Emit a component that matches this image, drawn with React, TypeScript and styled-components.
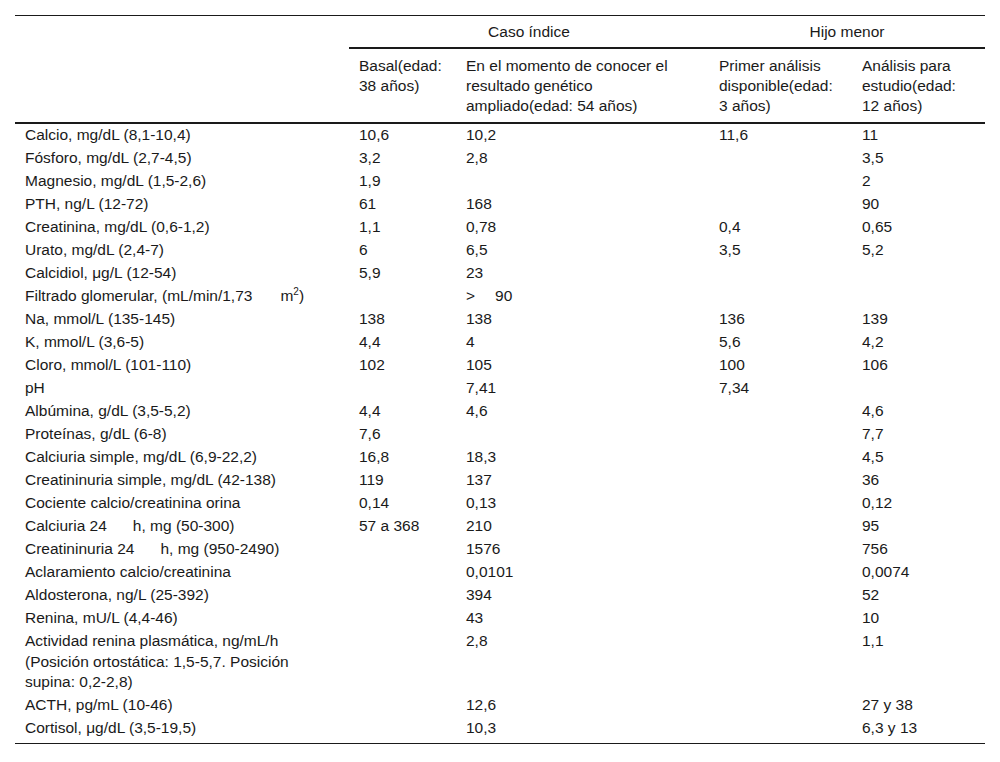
import React from 'react';
import styled, { createGlobalStyle } from 'styled-components';

const GlobalStyle = createGlobalStyle`
  body {
    margin: 0;
    background: #fff;
    font-family: "Liberation Sans", Arial, sans-serif;
    color: #1a1a1a;
  }
`;

const Page = styled.div`
  padding: 15px 15px 0 15px;
`;

const Table = styled.table`
  width: 970px;
  border-collapse: collapse;
  font-size: 15.5px;
  line-height: 20px;
  border-top: 1px solid #1a1a1a;
  border-bottom: 1px solid #1a1a1a;
`;

const Head = styled.thead`
  border-bottom: 2px solid #1a1a1a;
`;

const Th = styled.th<{ $group?: boolean }>`
  font-weight: normal;
  text-align: ${p => (p.$group ? 'center' : 'left')};
  vertical-align: top;
  padding: ${p => (p.$group ? '6px 10px 5px' : '7px 10px 6px')};
  border-bottom: ${p => (p.$group ? '2px solid #1a1a1a' : 'none')};
`;

const Body = styled.tbody`
  line-height: 20.5px;
  tr:last-child td {
    padding-bottom: 4px;
  }
`;

const Td = styled.td`
  vertical-align: top;
  padding: 1.25px 10px;
`;

const Sup = styled.sup`
  font-size: 10px;
  line-height: 0;
`;

const Gap = styled.span<{ $w: number }>`
  display: inline-block;
  width: ${p => p.$w}px;
`;

type Row = [React.ReactNode, string, React.ReactNode, string, string];

const rows: Row[] = [
  ['Calcio, mg/dL (8,1-10,4)', '10,6', '10,2', '11,6', '11'],
  ['Fósforo, mg/dL (2,7-4,5)', '3,2', '2,8', '', '3,5'],
  ['Magnesio, mg/dL (1,5-2,6)', '1,9', '', '', '2'],
  ['PTH, ng/L (12-72)', '61', '168', '', '90'],
  ['Creatinina, mg/dL (0,6-1,2)', '1,1', '0,78', '0,4', '0,65'],
  ['Urato, mg/dL (2,4-7)', '6', '6,5', '3,5', '5,2'],
  ['Calcidiol, μg/L (12-54)', '5,9', '23', '', ''],
  [
    <>Filtrado glomerular, (mL/min/1,73<Gap $w={28} />m<Sup>2</Sup>)</>,
    '',
    <>&gt;<Gap $w={20} />90</>,
    '',
    '',
  ],
  ['Na, mmol/L (135-145)', '138', '138', '136', '139'],
  ['K, mmol/L (3,6-5)', '4,4', '4', '5,6', '4,2'],
  ['Cloro, mmol/L (101-110)', '102', '105', '100', '106'],
  ['pH', '', '7,41', '7,34', ''],
  ['Albúmina, g/dL (3,5-5,2)', '4,4', '4,6', '', '4,6'],
  ['Proteínas, g/dL (6-8)', '7,6', '', '', '7,7'],
  ['Calciuria simple, mg/dL (6,9-22,2)', '16,8', '18,3', '', '4,5'],
  ['Creatininuria simple, mg/dL (42-138)', '119', '137', '', '36'],
  ['Cociente calcio/creatinina orina', '0,14', '0,13', '', '0,12'],
  [<>Calciuria 24<Gap $w={26} />h, mg (50-300)</>, '57 a 368', '210', '', '95'],
  [<>Creatininuria 24<Gap $w={26} />h, mg (950-2490)</>, '', '1576', '', '756'],
  ['Aclaramiento calcio/creatinina', '', '0,0101', '', '0,0074'],
  ['Aldosterona, ng/L (25-392)', '', '394', '', '52'],
  ['Renina, mU/L (4,4-46)', '', '43', '', '10'],
  [
    'Actividad renina plasmática, ng/mL/h (Posición ortostática: 1,5-5,7. Posición supina: 0,2-2,8)',
    '',
    '2,8',
    '',
    '1,1',
  ],
  ['ACTH, pg/mL (10-46)', '', '12,6', '', '27 y 38'],
  ['Cortisol, μg/dL (3,5-19,5)', '', '10,3', '', '6,3 y 13'],
];

export default function App() {
  return (
    <Page>
      <GlobalStyle />
      <Table>
        <colgroup>
          <col style={{ width: 334 }} />
          <col style={{ width: 107 }} />
          <col style={{ width: 253 }} />
          <col style={{ width: 143 }} />
          <col style={{ width: 133 }} />
        </colgroup>
        <Head>
          <tr>
            <Th />
            <Th $group colSpan={2}>Caso índice</Th>
            <Th $group colSpan={2}>Hijo menor</Th>
          </tr>
          <tr>
            <Th />
            <Th>Basal(edad: 38 años)</Th>
            <Th>En el momento de conocer el resultado genético ampliado(edad: 54 años)</Th>
            <Th>Primer análisis disponible(edad: 3 años)</Th>
            <Th>Análisis para estudio(edad: 12 años)</Th>
          </tr>
        </Head>
        <Body>
          {rows.map((r, i) => (
            <tr key={i}>
              {r.map((c, j) => (
                <Td key={j}>{c}</Td>
              ))}
            </tr>
          ))}
        </Body>
      </Table>
    </Page>
  );
}
